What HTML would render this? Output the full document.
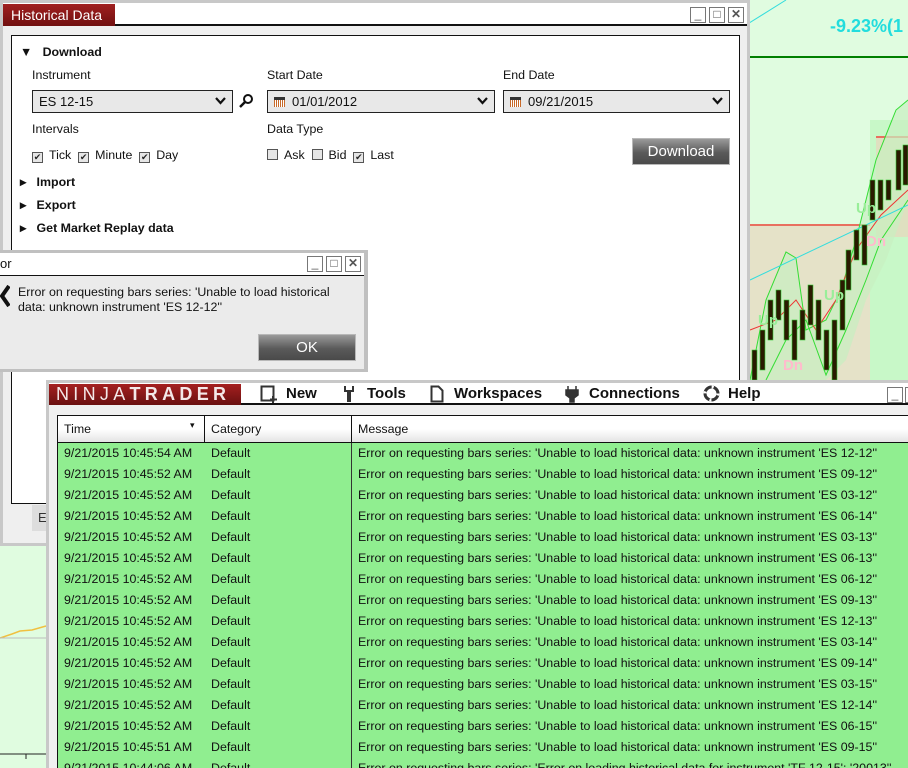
<!DOCTYPE html>
<html style="width:908px;height:768px;overflow:hidden"><head><meta charset="utf-8"><style>
*{margin:0;padding:0;box-sizing:border-box}
body{width:908px;height:768px;overflow:hidden;position:relative;background:#e0fce0;font-family:"Liberation Sans",Arial,sans-serif;font-size:12.4px;color:#111}
.abs{position:absolute}
.btn{position:absolute;background:linear-gradient(#9a9a9a,#5a5a5a 55%,#4a4a4a);border:1px solid #b8b8b8;color:#fff;font-size:15px;text-align:center}
.cb{display:inline-block;width:11px;height:11px;border:1px solid #555;background:#e6e6e6;vertical-align:-1px;margin-right:6px;font-size:9px;line-height:9px;text-align:center;color:#222}
.wb{position:absolute;width:16px;height:16px;border:1px solid #777;background:#fff;font-size:12px;line-height:13px;text-align:center;color:#555}
.combo{position:absolute;height:23px;border:1px solid #222;background:#e8e8e8;font-size:13px;line-height:21px;padding-left:6px}
.combo svg{position:absolute;right:6px;top:6px}
.cal{display:inline-block;width:11px;height:10px;background:#8a3a10;border-top:3px solid #333;margin-right:7px;vertical-align:-1px;background-image:repeating-linear-gradient(90deg,#c86a2a 0 1px,#fff 1px 2px)}
.bold{font-weight:bold}
.row{position:absolute;left:57px;width:851px;height:21px;background:#90ee90;font-size:12.4px;line-height:21px}
.row span{position:absolute}
</style></head><body>

<svg class="abs" style="left:746px;top:0" width="162" height="382">
<rect width="162" height="382" fill="#e0fce0"/>
<line x1="0" y1="57" x2="162" y2="57" stroke="#008000" stroke-width="2"/>
<line x1="40" y1="0" x2="0" y2="25" stroke="#33dddd" stroke-width="1"/>
<rect x="4" y="225" width="120" height="157" fill="#e5e2c8"/>
<rect x="124" y="120" width="38" height="262" fill="#c8f8c8"/>
<rect x="130" y="137" width="32" height="100" fill="#dfe0c0"/>
<line x1="4" y1="225" x2="124" y2="225" stroke="#e87060" stroke-width="2"/>
<line x1="130" y1="137" x2="162" y2="137" stroke="#e87060" stroke-width="2"/>
<polygon points="4,380 20,300 40,252 50,258 60,330 80,320 95,290 110,240 130,160 150,110 162,100 162,200 140,260 120,300 100,360 80,380" fill="#c8f0c0" opacity=".7"/>
<polyline points="4,380 20,300 40,252 50,258 60,330 80,320 95,290 110,240 130,160 150,110 162,100" fill="none" stroke="#33dd33"/>
<polyline points="20,380 40,340 60,320 80,375 100,330 120,280 135,240 162,200" fill="none" stroke="#33dd33"/>
<polyline points="4,330 30,320 50,300 70,330 90,300 110,250 135,215 162,190" fill="none" stroke="#ee3333"/>
<line x1="4" y1="280" x2="162" y2="205" stroke="#33dddd"/>
<g fill="#2a1a00" stroke="#33cc33" stroke-width=".6">
<rect x="6" y="350" width="5" height="30"/><rect x="14" y="330" width="5" height="40"/><rect x="22" y="300" width="5" height="40"/><rect x="30" y="290" width="5" height="30"/><rect x="38" y="300" width="5" height="40"/><rect x="46" y="320" width="5" height="40"/><rect x="54" y="310" width="5" height="30"/><rect x="62" y="285" width="5" height="40"/><rect x="70" y="300" width="5" height="40"/><rect x="78" y="330" width="5" height="40"/><rect x="86" y="320" width="5" height="60"/><rect x="94" y="280" width="5" height="50"/><rect x="100" y="250" width="5" height="40"/><rect x="108" y="230" width="5" height="30"/><rect x="116" y="225" width="5" height="40"/><rect x="124" y="180" width="5" height="40"/><rect x="132" y="180" width="5" height="30"/><rect x="140" y="180" width="5" height="20"/><rect x="150" y="150" width="5" height="40"/><rect x="157" y="145" width="5" height="40"/>
</g>
<text x="12" y="325" fill="#99ee99" font-size="15" font-weight="bold" font-family="Liberation Sans">Up</text>
<text x="78" y="300" fill="#99ee99" font-size="15" font-weight="bold" font-family="Liberation Sans">Up</text>
<text x="110" y="213" fill="#99ee99" font-size="15" font-weight="bold" font-family="Liberation Sans">Up</text>
<text x="120" y="246" fill="#ffbbcc" font-size="15" font-weight="bold" font-family="Liberation Sans">Dn</text>
<text x="37" y="370" fill="#ffbbcc" font-size="15" font-weight="bold" font-family="Liberation Sans">Dn</text>
<text x="84" y="32" fill="#22dddd" font-size="18" font-weight="bold" font-family="Liberation Sans">-9.23%(1</text>
</svg>

<svg class="abs" style="left:0;top:545px" width="48" height="223">
<polyline points="0,93 12,89 20,86 32,85 46,81" fill="none" stroke="#f0c040" stroke-width="1.5"/>
<line x1="0" y1="93" x2="46" y2="93" stroke="#bbb"/>
<line x1="0" y1="209" x2="46" y2="209" stroke="#222"/>
<line x1="26" y1="209" x2="26" y2="214" stroke="#222"/>
</svg>

<div class="abs" style="left:0;top:0;width:750px;height:546px;background:#c8c8c8"></div>
<div class="abs" style="left:3px;top:3px;width:744px;height:540px;background:#efefef"></div>
<div class="abs" style="left:3px;top:3px;width:744px;height:23px;background:#fff;border-bottom:2px solid #111"></div>
<div class="abs" style="left:3px;top:4px;width:112px;height:22px;background:linear-gradient(#a02020,#701010);color:#fff;font-size:14px;line-height:22px;padding-left:8px">Historical Data</div>
<div class="wb" style="left:690px;top:7px">_</div>
<div class="wb" style="left:709px;top:7px">□</div>
<div class="wb" style="left:728px;top:7px;font-weight:bold">✕</div>
<div class="abs" style="left:11px;top:35px;width:729px;height:469px;background:#fff;border:1px solid #111"></div>
<div class="abs bold" style="left:20px;top:45px">▼&nbsp;&nbsp;&nbsp;Download</div>
<div class="abs" style="left:32px;top:68px">Instrument</div>
<div class="abs" style="left:267px;top:68px">Start Date</div>
<div class="abs" style="left:503px;top:68px">End Date</div>
<div class="combo" style="left:32px;top:90px;width:201px">ES 12-15<svg width="11" height="9"><path d="M1 1l4.5 5 4.5-5" fill="none" stroke="#111" stroke-width="2.2"/></svg></div>
<svg class="abs" style="left:239px;top:93px" width="16" height="16"><circle cx="9" cy="6" r="4" fill="none" stroke="#111" stroke-width="2"/><line x1="6" y1="9" x2="1" y2="14" stroke="#111" stroke-width="2.5"/></svg>
<div class="combo" style="left:267px;top:90px;width:228px"><span class="cal"></span>01/01/2012<svg width="11" height="9"><path d="M1 1l4.5 5 4.5-5" fill="none" stroke="#111" stroke-width="2.2"/></svg></div>
<div class="combo" style="left:503px;top:90px;width:227px"><span class="cal"></span>09/21/2015<svg width="11" height="9"><path d="M1 1l4.5 5 4.5-5" fill="none" stroke="#111" stroke-width="2.2"/></svg></div>
<div class="abs" style="left:32px;top:122px">Intervals</div>
<div class="abs" style="left:267px;top:122px">Data Type</div>
<div class="abs" style="left:32px;top:148px"><span class="cb">✔</span>Tick&nbsp;&nbsp;<span class="cb">✔</span>Minute&nbsp;&nbsp;<span class="cb">✔</span>Day</div>
<div class="abs" style="left:267px;top:148px"><span class="cb"></span>Ask&nbsp;&nbsp;<span class="cb"></span>Bid&nbsp;&nbsp;<span class="cb">✔</span>Last</div>
<div class="btn" style="left:632px;top:138px;width:98px;height:27px;line-height:25px">Download</div>
<div class="abs bold" style="left:20px;top:174px">▸&nbsp;&nbsp;&nbsp;Import</div>
<div class="abs bold" style="left:20px;top:197px">▸&nbsp;&nbsp;&nbsp;Export</div>
<div class="abs bold" style="left:20px;top:220px">▸&nbsp;&nbsp;&nbsp;Get Market Replay data</div>
<div class="abs" style="left:32px;top:505px;width:20px;height:26px;background:#ddd;font-size:13px;line-height:26px;padding-left:6px;color:#333">E</div>

<div class="abs" style="left:0;top:250px;width:368px;height:122px;background:#c0c0c0"></div>
<div class="abs" style="left:0;top:253px;width:364px;height:116px;background:#ebebeb"></div>
<div class="abs" style="left:0;top:253px;width:364px;height:23px;background:#fff;border-bottom:1px solid #111;font-size:13px;line-height:22px">or</div>
<div class="wb" style="left:307px;top:256px">_</div>
<div class="wb" style="left:326px;top:256px">□</div>
<div class="wb" style="left:345px;top:256px;font-weight:bold">✕</div>
<svg class="abs" style="left:0;top:285px" width="10" height="22"><path d="M9 1L2 11l7 10" fill="none" stroke="#111" stroke-width="4"/></svg>
<div class="abs" style="left:18px;top:285px;line-height:15px;width:320px">Error on requesting bars series: 'Unable to load historical data: unknown instrument 'ES 12-12''</div>
<div class="btn" style="left:258px;top:334px;width:98px;height:27px;line-height:25px">OK</div>

<div class="abs" style="left:46px;top:380px;width:862px;height:388px;background:#c8c8c8"></div>
<div class="abs" style="left:49px;top:383px;width:859px;height:385px;background:#f0f0f0"></div>
<div class="abs" style="left:49px;top:383px;width:859px;height:22px;background:#fff;border-bottom:2px solid #111"></div>
<div class="abs" style="left:49px;top:384px;width:192px;height:21px;background:linear-gradient(#a52020,#6a1010);color:#f4e8e8;font-size:18px;line-height:21px;letter-spacing:4.3px;padding-left:7px;white-space:nowrap;overflow:hidden">NINJA<b>TRADER</b></div>
<svg class="abs" style="left:260px;top:385px" width="18" height="18"><rect x="1.5" y="1.5" width="12" height="14" fill="none" stroke="#333" stroke-width="2"/><path d="M13 11v7M10 14.5h7" stroke="#333" stroke-width="2"/></svg>
<div class="abs bold" style="left:286px;top:385px;font-size:15px">New</div>
<svg class="abs" style="left:342px;top:385px" width="14" height="18"><path d="M2 1v6h3v10h4V7h3V1h-2v4H4V1z" fill="#333"/></svg>
<div class="abs bold" style="left:367px;top:385px;font-size:15px">Tools</div>
<svg class="abs" style="left:430px;top:385px" width="14" height="18"><path d="M1.5 1.5h7l4 4v11h-11z" fill="none" stroke="#333" stroke-width="2"/></svg>
<div class="abs bold" style="left:454px;top:385px;font-size:15px">Workspaces</div>
<svg class="abs" style="left:565px;top:385px" width="14" height="18"><path d="M3 1v4M11 1v4M1 5h12v5l-4 3v4H5v-4l-4-3z" fill="#333" stroke="#333" stroke-width="1.5"/></svg>
<div class="abs bold" style="left:589px;top:385px;font-size:15px">Connections</div>
<svg class="abs" style="left:703px;top:385px" width="17" height="17"><circle cx="8.5" cy="8.5" r="6.5" fill="none" stroke="#333" stroke-width="3"/><circle cx="8.5" cy="8.5" r="6.5" fill="none" stroke="#fff" stroke-width="3" stroke-dasharray="2 8.2"/></svg>
<div class="abs bold" style="left:728px;top:385px;font-size:15px">Help</div>
<div class="wb" style="left:887px;top:387px">_</div>
<div class="wb" style="left:905px;top:387px"></div>

<div class="abs" style="left:57px;top:415px;width:851px;height:28px;background:linear-gradient(#fff 50%,#e4e4e4);border:1px solid #111;border-right:none"></div>
<div class="abs" style="left:64px;top:422px">Time</div>
<div class="abs" style="left:190px;top:420px;font-size:9px">▾</div>
<div class="abs" style="left:211px;top:422px">Category</div>
<div class="abs" style="left:358px;top:422px">Message</div>
<div class="abs" style="left:204px;top:415px;width:1px;height:28px;background:#111"></div>
<div class="abs" style="left:351px;top:415px;width:1px;height:28px;background:#111"></div>

<div id="rows"></div>
<script>
var t=["54","52","52","52","52","52","52","52","52","52","52","52","52","52","51","50"];
var e=["12-12","09-12","03-12","06-14","03-13","06-13","06-12","09-13","12-13","03-14","09-14","03-15","12-14","06-15","09-15"];
var h="";
for(var i=0;i<16;i++){
 var y=443+i*21;
 var ht=i<15?21:768-y;
 var msg=i<15?"Error on requesting bars series: 'Unable to load historical data: unknown instrument 'ES "+e[i]+"''":"Error on requesting bars series: 'Error on loading historical data for instrument 'TF 12-15': '20013''";
 var tm=i<15?"9/21/2015 10:45:"+t[i]+" AM":"9/21/2015 10:44:06 AM";
 h+='<div class="row" style="top:'+y+'px;height:'+ht+'px;overflow:hidden"><span style="left:7px">'+tm+'</span><span style="left:154px">Default</span><span style="left:301px;white-space:nowrap">'+msg+'</span></div>';
}
h+='<div class="abs" style="left:57px;top:415px;width:1px;height:353px;background:#111"></div><div class="abs" style="left:351px;top:443px;width:1px;height:325px;background:#333"></div>';
document.getElementById("rows").innerHTML=h;
</script>
</body></html>
